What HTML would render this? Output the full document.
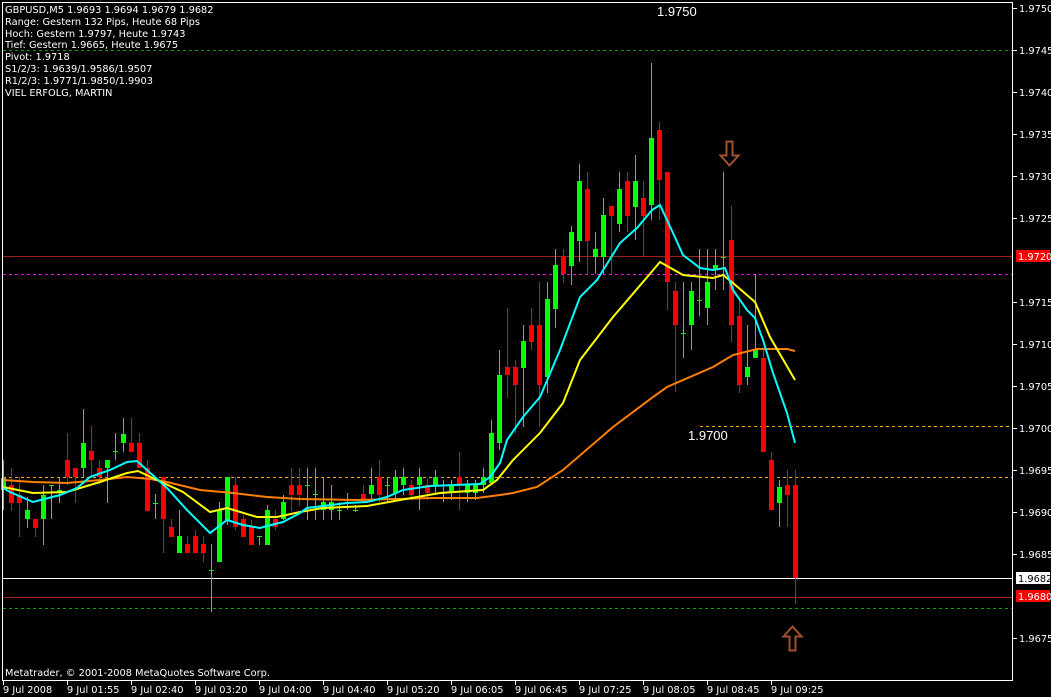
<!DOCTYPE html>
<html><head><meta charset="utf-8"><style>
html,body{margin:0;padding:0;background:#000;}
body{width:1051px;height:697px;overflow:hidden;position:relative;font-family:"DejaVu Sans","Liberation Sans",sans-serif;}
svg{position:absolute;left:0;top:0;}
.t{fill:#fff;font-size:9.8px;font-family:"DejaVu Sans","Liberation Sans",sans-serif;}
</style></head><body>
<svg id="c" width="1051" height="697" xmlns="http://www.w3.org/2000/svg" shape-rendering="crispEdges">
<rect width="1051" height="697" fill="#000"/>
<g id="lines">
<line x1="3" y1="50.5" x2="1013" y2="50.5" stroke="#00a000" stroke-dasharray="3,3"/>
<line x1="3" y1="608.5" x2="1013" y2="608.5" stroke="#00a000" stroke-dasharray="3,3"/>
<line x1="3" y1="256.5" x2="1013" y2="256.5" stroke="#a02020"/>
<line x1="3" y1="597.5" x2="1013" y2="597.5" stroke="#a02020"/>
<line x1="3" y1="274.5" x2="1013" y2="274.5" stroke="#ff00ff" stroke-dasharray="3,3"/>
<line x1="3" y1="477.5" x2="1013" y2="477.5" stroke="#ffa500" stroke-dasharray="3,3"/>
<line x1="700" y1="426.5" x2="1013" y2="426.5" stroke="#ffa500" stroke-dasharray="3,3"/>
<line x1="3" y1="578.5" x2="1013" y2="578.5" stroke="#ffffff"/>
</g>
<g id="candles"></g>
<g id="ma" fill="none" stroke-width="2" shape-rendering="auto"></g>
<rect x="2.5" y="2.5" width="1010" height="678" fill="none" stroke="#fff"/>
<g id="axis"></g>
<text class="t" x="5" y="13">GBPUSD,M5  1.9693 1.9694 1.9679 1.9682</text>
<text class="t" x="5" y="25">Range: Gestern 132 Pips, Heute 68 Pips</text>
<text class="t" x="5" y="37">Hoch: Gestern 1.9797, Heute 1.9743</text>
<text class="t" x="5" y="48">Tief:  Gestern 1.9665, Heute 1.9675</text>
<text class="t" x="5" y="60">Pivot: 1.9718</text>
<text class="t" x="5" y="72">S1/2/3: 1.9639/1.9586/1.9507</text>
<text class="t" x="5" y="84">R1/2/3: 1.9771/1.9850/1.9903</text>
<text class="t" x="5" y="96">VIEL ERFOLG, MARTIN</text>
<text class="t" x="5" y="676">Metatrader, © 2001-2008 MetaQuotes Software Corp.</text>
<text x="657" y="16" fill="#fff" font-size="13" font-family="Liberation Sans,sans-serif">1.9750</text>
<text x="688" y="440" fill="#fff" font-size="13" font-family="Liberation Sans,sans-serif">1.9700</text>
<path d="M726.5 141.5h6v14h6l-9 10l-9-10h6z" fill="none" stroke="#a0522d" stroke-width="2" shape-rendering="auto"/>
<path d="M795.5 650.5h-6v-14h-6l9-10l9 10h-6z" fill="none" stroke="#a0522d" stroke-width="2" shape-rendering="auto"/>
</svg>
<script>
var NS="http://www.w3.org/2000/svg";
function el(p,n,a){var e=document.createElementNS(NS,n);for(var k in a)e.setAttribute(k,a[k]);p.appendChild(e);return e;}
var C=[
[490,478,460,510],[485,503,468,511],[495,503,477,537],[519,510,497,528],[519,528,519,537],[519,495,485,545],
[485,485,485,519],[493,490,477,503],[460,477,433,485],[468,477,468,503],[468,443,409,477],[451,460,426,477],
[468,477,460,485],[468,460,460,503],[451,451,433,460],[443,434,418,452],[443,452,418,452],[443,468,433,468],
[468,511,460,511],[503,503,494,519],[477,519,477,553],[527,537,519,537],[553,536,510,553],[544,553,536,553],
[536,553,530,553],[544,553,536,562],[570,570,544,612],[562,510,502,562],[520,477,477,525],[485,527,477,530],
[519,537,515,537],[527,545,520,545],[536,536,536,545],[545,510,505,545],[519,527,510,530],[519,502,495,520],
[485,495,468,511],[485,495,468,506],[485,485,468,520],[494,494,468,520],[510,502,477,520],[510,502,485,520],
[510,510,502,520],[502,502,493,510],[510,510,505,512],[494,502,485,502],[494,485,468,502],[477,495,460,502],
[485,485,477,503],[493,477,470,500],[485,477,468,495],[485,495,480,500],[485,477,468,510],[485,493,478,500],
[485,477,470,495],[485,485,480,502],[493,485,480,500],[477,485,452,510],[493,485,480,502],[493,485,480,500],
[485,477,468,493],[483,433,420,485],[443,375,350,450],[367,375,308,398],[367,385,360,433],[368,341,325,427],
[325,342,308,350],[325,385,282,427],[377,299,282,393],[309,265,249,328],[257,274,249,283],[266,232,226,285],
[241,181,164,262],[189,241,172,274],[257,249,232,274],[257,215,198,274],[206,216,206,274],[224,189,172,232],
[181,216,172,232],[207,181,155,240],[198,216,181,257],[205,138,63,220],[130,180,122,220],[172,282,172,310],
[291,325,282,392],[333,333,282,358],[325,291,282,350],[300,300,249,316],[308,282,249,325],[270,265,249,290],
[257,257,172,290],[240,325,206,342],[316,385,300,393],[377,367,325,385],[358,350,274,358],[358,452,350,452],
[460,510,452,510],[503,487,480,527],[485,495,470,527],[485,578,470,604]
];
var g=document.getElementById('candles');
C.forEach(function(c,i){
 var x=3+8*i; var o=c[0],cl=c[1],h=c[2],l=c[3];
 var up=cl<o, col=up?'#00ff00':'#ff0000';
 if(o==cl) col='#00ff00';
 el(g,'line',{x1:x+0.5,y1:h,x2:x+0.5,y2:l,stroke:col});
 var t=Math.min(o,cl),b=Math.max(o,cl);
 if(b-t<1){el(g,'line',{x1:x-2,y1:t+0.5,x2:x+3,y2:t+0.5,stroke:col});}
 else el(g,'rect',{x:x-2,y:t,width:5,height:b-t,fill:col});
});
var ma=document.getElementById('ma');
function pl(pts,col){el(ma,'polyline',{points:pts,stroke:col});}
pl("3,480 33,482 67,483 100,480 127,477 150,479 167,482 200,490 233,493 267,497 300,499 357,500 433,498 477,498 500,495 513,493 537,487 563,470 613,427 653,397 667,387 713,367 733,355 757,349 787,349 795,351","#ff8000");
pl("3,487 33,493 67,492 100,482 127,473 138,471 157,480 183,492 210,512 227,508 257,517 277,517 300,512 323,508 367,506 400,500 440,493 483,490 497,480 513,460 540,433 563,403 580,360 613,317 643,282 660,262 683,275 713,278 723,275 733,283 755,302 770,337 795,380","#ffff00");
pl("3,488 10,492 33,502 60,495 77,488 90,477 110,470 127,462 137,461 147,470 167,488 187,510 210,533 227,520 243,525 260,528 267,526 283,522 300,513 307,508 347,503 367,502 387,497 403,490 430,486 480,484 490,477 500,463 507,440 523,417 540,397 560,350 580,297 597,280 620,243 637,228 652,210 660,205 673,233 683,255 700,268 713,270 725,268 733,290 747,310 755,318 763,340 773,373 787,413 795,443","#00ffff");
var ax=document.getElementById('axis');
var labels=[["1.9750",8],["1.9745",50],["1.9740",92],["1.9735",134],["1.9730",176],["1.9725",218],["1.9715",302],["1.9710",344],["1.9705",386],["1.9700",428],["1.9695",470],["1.9690",512],["1.9685",554],["1.9675",638]];
labels.forEach(function(l){
 el(ax,'line',{x1:1013,y1:l[1]+0.5,x2:1017,y2:l[1]+0.5,stroke:'#fff'});
 var t=el(ax,'text',{x:1019,y:l[1]+4,'class':'t'});t.textContent=l[0];
});
function box(y,bg,fg,txt){el(ax,'rect',{x:1016,y:y-6,width:34,height:12,fill:bg});var t=el(ax,'text',{x:1018,y:y+4,'class':'t'});t.setAttribute('style','fill:'+fg);t.textContent=txt;}
box(256,'#ff0000','#fff','1.9720');box(578,'#ffffff','#000','1.9682');box(596,'#ff0000','#fff','1.9680');
var times=[["9 Jul 2008",3],["9 Jul 01:55",67],["9 Jul 02:40",131],["9 Jul 03:20",195],["9 Jul 04:00",259],["9 Jul 04:40",323],["9 Jul 05:20",387],["9 Jul 06:05",451],["9 Jul 06:45",515],["9 Jul 07:25",579],["9 Jul 08:05",643],["9 Jul 08:45",707],["9 Jul 09:25",771]];
times.forEach(function(t){
 el(ax,'line',{x1:t[1]+0.5,y1:681,x2:t[1]+0.5,y2:685,stroke:'#fff'});
 var e=el(ax,'text',{x:t[1],y:693,'class':'t'});e.textContent=t[0];
});
</script>
</body></html>
